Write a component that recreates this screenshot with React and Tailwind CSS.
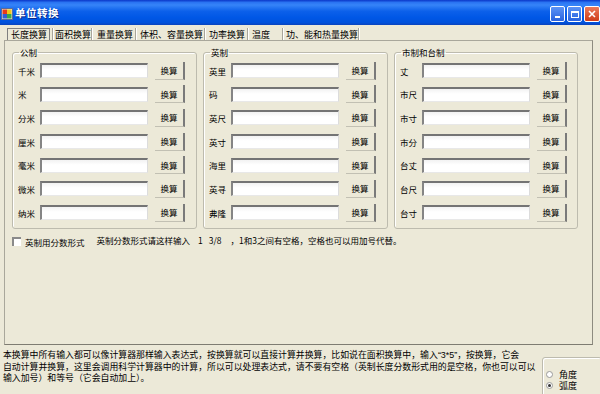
import React from "react";

const rowsA = ["千米", "米", "分米", "厘米", "毫米", "微米", "纳米"];
const rowsB = ["英里", "码", "英尺", "英寸", "海里", "英寻", "弗隆"];
const rowsC = ["丈", "市尺", "市寸", "市分", "台丈", "台尺", "台寸"];

function Row({ label }) {
  return (
    <div className="flex items-center h-[18px]">
      <div className="w-[22px] text-[8.5px] leading-[10px] whitespace-nowrap">{label}</div>
      <div className="w-[108px] h-[15px] bg-[linear-gradient(180deg,#f2f2f2,#ffffff_40%)] border-t-2 border-l-2 border-t-[#747474] border-l-[#858585] border-r border-b border-r-[#dcdcdc] border-b-[#e8e8e8]" />
      <div className="ml-[7px] w-[30px] h-[18px] flex items-center justify-center text-[8.5px] leading-[10px] border-r-2 border-r-[#7a7a7a] border-b border-b-[#c2c0b3]">
        换算
      </div>
    </div>
  );
}

function Group({ title, rows, w }) {
  return (
    <fieldset className={`${w} h-[183px] border border-[#bdbbae] rounded-[3px] shadow-[inset_1px_1px_0_#ffffff] pl-[5px] pt-[3.5px]`}>
      <legend className="ml-[1px] px-[1px] text-[8.5px] leading-[12px]">{title}</legend>
      <div className="flex flex-col gap-[5.7px]">
        {rows.map((r) => (
          <Row key={r} label={r} />
        ))}
      </div>
    </fieldset>
  );
}

const tabs = [
  { t: "面积换算", w: "w-[39px]", p: "pl-[2px]" },
  { t: "重量换算", w: "w-[44px]", p: "pl-[5px]" },
  { t: "体积、容量换算", w: "w-[69px]", p: "pl-[4px]" },
  { t: "功率换算", w: "w-[43px]", p: "pl-[4px]" },
  { t: "温度", w: "w-[35px]", p: "pl-[4px]" },
  { t: "功、能和热量换算", w: "w-[76px]", p: "pl-[3px]" },
];

export default function App() {
  return (
    <div className="w-[600px] h-[394px] bg-[#ECE9D8] overflow-hidden flex flex-col text-black font-['Noto_Sans_CJK_SC',sans-serif]">
      {/* Title bar */}
      <div className="h-[25px] shrink-0 flex items-center bg-[linear-gradient(180deg,#0a36c8_0%,#2a74f2_10%,#3684f8_20%,#0c60ea_45%,#0057e6_70%,#0052dc_90%,#0a44bd_100%)]">
        <svg width="12" height="12" viewBox="0 0 12 12" className="ml-[1px] mt-[2px]">
          <rect x="0.5" y="0.5" width="11" height="11" fill="#e8e4d0" stroke="#5a6a9a" />
          <rect x="1.5" y="1.5" width="4.5" height="4.5" fill="#e83a1c" />
          <rect x="6" y="1.5" width="4.5" height="4.5" fill="#f2c81a" />
          <rect x="1.5" y="6" width="4.5" height="4.5" fill="#2f5fd8" />
          <rect x="6" y="6" width="4.5" height="4.5" fill="#3aa84a" />
        </svg>
        <div className="ml-[2px] mt-[1px] text-white font-bold text-[10.5px] leading-[12px] tracking-[0.5px] [text-shadow:1px_1px_0_#0a2a8a]">
          单位转换
        </div>
        <div className="ml-auto mt-[6px] flex gap-[2px] self-start">
          <div className="w-[15px] h-[16px] rounded-[2px] border border-white bg-[linear-gradient(180deg,#5c93f5,#2a63df)] flex items-end justify-center pb-[3px]">
            <div className="w-[5px] h-[2px] bg-white" />
          </div>
          <div className="w-[15px] h-[16px] rounded-[2px] border border-white bg-[linear-gradient(180deg,#5c93f5,#2a63df)] flex items-center justify-center">
            <div className="w-[8px] h-[7px] border border-white border-t-2" />
          </div>
          <div className="w-[16px] h-[16px] rounded-[2px] border border-white bg-[linear-gradient(180deg,#ec7a5a,#cf3c18)] flex items-center justify-center">
            <svg width="8" height="8" viewBox="0 0 8 8">
              <path d="M1 1L7 7M7 1L1 7" stroke="white" strokeWidth="1.6" />
            </svg>
          </div>
        </div>
      </div>

      {/* Tabs */}
      <div className="mt-[3px] h-[12px] shrink-0 flex items-stretch pl-[7px] text-[9px] leading-[11px]">
        <div className="w-[43px] border border-[#7f7f7f] border-b-0 flex items-center pl-[3px] whitespace-nowrap">长度换算</div>
        <div className="w-[2px]" />
        {tabs.map((x) => (
          <div key={x.t} className={`${x.w} ${x.p} flex items-center whitespace-nowrap border-l border-l-[#a7a59a] shadow-[inset_1px_0_0_#ffffff]`}>
            {x.t}
          </div>
        ))}
        <div className="border-l border-l-[#a7a59a] shadow-[inset_1px_0_0_#ffffff] w-[2px]" />
      </div>

      {/* Tab panel */}
      <div className="ml-[4px] w-[589px] h-[305px] shrink-0 border border-[#a9a79b] border-r-[#8d8b80] border-b-[#7e7c72] pt-[5px] pl-[7px]">
        <div className="flex gap-[6px]">
          <Group title="公制" rows={rowsA} w="w-[185px]" />
          <Group title="英制" rows={rowsB} w="w-[185px]" />
          <Group title="市制和台制" rows={rowsC} w="w-[184px]" />
        </div>
        <div className="mt-[6px] flex items-start h-[14px]">
          <div className="mt-[2px] w-[9px] h-[9px] bg-white border-t-2 border-l-2 border-t-[#8a8a8a] border-l-[#8a8a8a]" />
          <div className="ml-[4px] mt-[2px] text-[8.5px] leading-[10px] whitespace-nowrap">英制用分数形式</div>
          <div className="ml-[12px] text-[8.5px] leading-[10px] whitespace-nowrap flex">
            <span>英制分数形式请这样输入</span>
            <span className="ml-[8px]">1</span>
            <span className="ml-[6px]">3/8</span>
            <span className="ml-[9px]">，1和3之间有空格，空格也可以用加号代替。</span>
          </div>
        </div>
      </div>

      {/* Bottom */}
      <div className="flex flex-1">
        <div className="w-[542px] shrink-0 pl-[3px] pt-[4px] text-[8.9px] leading-[11px] whitespace-nowrap">
          <div>
            本换算中所有输入都可以像计算器那样输入表达式，按换算就可以直接计算并换算，比如说在面积换算中，输入
            <span className="font-['Liberation_Sans',sans-serif]">“3*5”</span>
            ，按换算，它会
          </div>
          <div>自动计算并换算，这里会调用科学计算器中的计算，所以可以处理表达式，请不要有空格（英制长度分数形式用的是空格，你也可以可以</div>
          <div>输入加号）和等号（它会自动加上）。</div>
        </div>
        <div className="mt-[12px] w-[60px] h-[45px] shrink-0 border border-[#bdbbae] rounded-[3px] shadow-[inset_1px_1px_0_#ffffff] pl-[3px] pt-[11px] flex flex-col">
          <div className="flex items-center h-[11px]">
            <div className="w-[7px] h-[7px] rounded-full border border-[#9a9a9a] bg-white" />
            <div className="ml-[6px] text-[9px] leading-[11px]">角度</div>
          </div>
          <div className="flex items-center h-[11px]">
            <div className="w-[7px] h-[7px] rounded-full border border-[#9a9a9a] bg-white flex items-center justify-center">
              <div className="w-[3px] h-[3px] rounded-full bg-[#333]" />
            </div>
            <div className="ml-[6px] text-[9px] leading-[11px]">弧度</div>
          </div>
        </div>
      </div>
    </div>
  );
}
